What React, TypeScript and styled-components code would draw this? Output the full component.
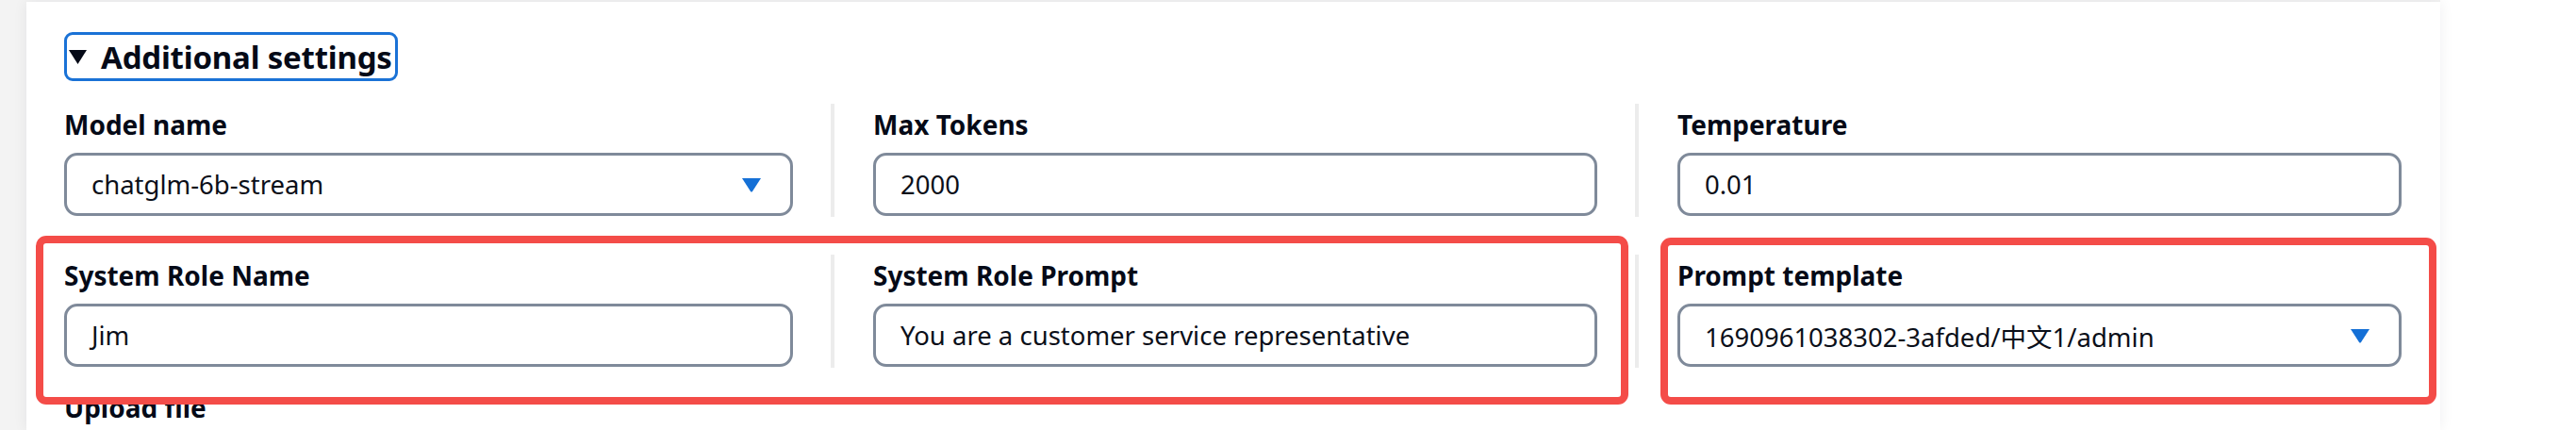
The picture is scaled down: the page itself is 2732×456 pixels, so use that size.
import React from "react";
import styled, { createGlobalStyle } from "styled-components";

const Global = createGlobalStyle`
  html, body { margin: 0; padding: 0; background: #ffffff; }
  body { font-family: "Noto Sans", "Open Sans", "Noto Sans CJK SC", sans-serif; color: #0b0f19; }
  * { box-sizing: border-box; }
`;

const Page = styled.div`
  display: flex;
  width: 2732px;
  height: 456px;
  overflow: hidden;
  background: #ffffff;
`;

const Backdrop = styled.div`
  flex: 0 0 2588px;
  background: #f3f3f3;
  padding: 2px 0 0 28px;
`;

const Panel = styled.div`
  background: #ffffff;
  height: 100%;
  padding: 32px 41px 0 40px;
  box-shadow: 0 0 14px rgba(20, 24, 40, 0.07);
  position: relative;
`;

const Summary = styled.div`
  display: inline-flex;
  align-items: center;
  height: 52px;
  padding: 0 3px 0 2px;
  border: 3px solid #1a72d6;
  border-radius: 9px;
  font-size: 33px;
  font-weight: 700;
  letter-spacing: -0.2px;
  gap: 15px;
  color: #050a17;
`;

const Row = styled.div<{ $top: number }>`
  position: relative;
  display: grid;
  grid-template-columns: 773fr 813fr 813fr;
  column-gap: 40px;
  margin-top: ${(p) => p.$top}px;
`;

const Column = styled.div<{ $divided?: boolean }>`
  height: 120px;
  padding-top: 4px;
  ${(p) => (p.$divided ? "border-left: 4px solid #ececec; padding-left: 41px;" : "")}
`;

const Label = styled.div`
  font-size: 28px;
  font-weight: 700;
  line-height: 36px;
  height: 36px;
  margin-bottom: 12px;
  color: #050a17;
  white-space: nowrap;
`;

const Field = styled.div`
  display: flex;
  align-items: center;
  justify-content: space-between;
  height: 67px;
  border: 3px solid #7f8a9a;
  border-radius: 14px;
  padding: 0 31px 0 26px;
  font-size: 27.5px;
  color: #0b0f19;
  background: #ffffff;
  white-space: nowrap;
`;

const Callout = styled.div<{ $left: number; $top: number; $w: number; $h: number }>`
  position: absolute;
  left: ${(p) => p.$left}px;
  top: ${(p) => p.$top}px;
  width: ${(p) => p.$w}px;
  height: ${(p) => p.$h}px;
  border: 8px solid #f44c48;
  border-radius: 11px;
  pointer-events: none;
  z-index: 2;
`;

const UploadLabel = styled(Label)`
  margin-top: 24px;
`;

const Caret = () => (
  <svg width="20" height="16" viewBox="0 0 20 16">
    <path d="M0 1 L20 1 L10.8 15.2 Q10 16 9.2 15.2 Z" fill="#1570d6" />
  </svg>
);

const Disclosure = () => (
  <svg width="19" height="15" viewBox="0 0 19 15">
    <path d="M0 0 L19 0 L9.5 15 Z" fill="#050a17" />
  </svg>
);

export default function App() {
  return (
    <>
      <Global />
      <Page>
        <Backdrop>
          <Panel>
            <Summary>
              <Disclosure />
              <span>Additional settings</span>
            </Summary>
            <Row $top={24}>
              <Column>
                <Label>Model name</Label>
                <Field>
                  <span>chatglm-6b-stream</span>
                  <Caret />
                </Field>
              </Column>
              <Column $divided>
                <Label>Max Tokens</Label>
                <Field>
                  <span>2000</span>
                </Field>
              </Column>
              <Column $divided>
                <Label>Temperature</Label>
                <Field>
                  <span>0.01</span>
                </Field>
              </Column>
            </Row>
            <Row $top={40}>
              <Column>
                <Label>System Role Name</Label>
                <Field>
                  <span>Jim</span>
                </Field>
              </Column>
              <Column $divided>
                <Label>System Role Prompt</Label>
                <Field>
                  <span>You are a customer service representative</span>
                </Field>
              </Column>
              <Column $divided>
                <Label>Prompt template</Label>
                <Field>
                  <span>1690961038302-3afded/中文1/admin</span>
                  <Caret />
                </Field>
              </Column>
              <Callout $left={-30} $top={-20} $w={1689} $h={179} />
              <Callout $left={1693} $top={-18} $w={823} $h={177} />
            </Row>
            <UploadLabel>Upload file</UploadLabel>
          </Panel>
        </Backdrop>
      </Page>
    </>
  );
}
